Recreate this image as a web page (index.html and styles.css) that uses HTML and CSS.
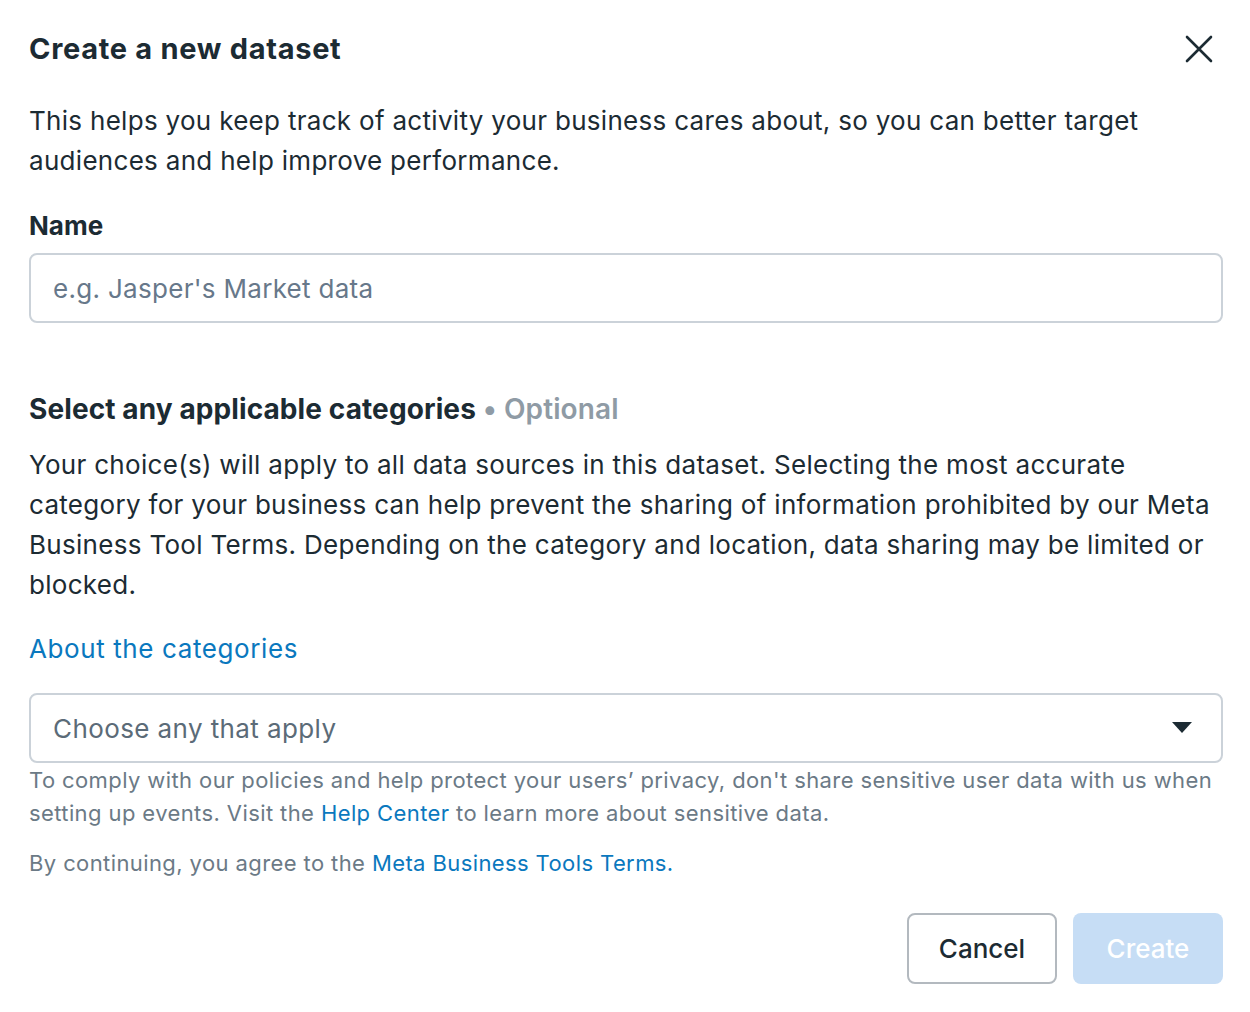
FILE: index.html
```html
<!DOCTYPE html>
<html lang="en">
<head>
<meta charset="utf-8">
<title>Create a new dataset</title>
<link rel="stylesheet" href="styles.css">
</head>
<body>
<div class="dialog">
  <div class="header">
    <h1 class="title">Create a new dataset</h1>
    <button class="close" aria-label="Close">
      <svg width="28" height="28" viewBox="0 0 28 28"><path d="M2 2 L26 26 M26 2 L2 26" stroke="#1c2b33" stroke-width="2.6" stroke-linecap="round" fill="none"/></svg>
    </button>
  </div>
  <p class="desc">This helps you keep track of activity your business cares about, so you can better target audiences and help improve performance.</p>
  <label class="label">Name</label>
  <div class="field"><span class="placeholder">e.g. Jasper's Market data</span></div>
  <h2 class="section">Select any applicable categories <span class="optional">• Optional</span></h2>
  <p class="para">Your choice(s) will apply to all data sources in this dataset. Selecting the most accurate category for your business can help prevent the sharing of information prohibited by our Meta Business Tool Terms. Depending on the category and location, data sharing may be limited or blocked.</p>
  <a class="link about">About the categories</a>
  <div class="field select"><span class="placeholder">Choose any that apply</span>
    <svg class="caret" width="20" height="12" viewBox="0 0 20 12"><path d="M0 0 H20 L10 11 Z" fill="#1c2b33"/></svg>
  </div>
  <p class="help">To comply with our policies and help protect your users’ privacy, don't share sensitive user data with us when setting up events. Visit the <a class="link">Help Center</a> to learn more about sensitive data.</p>
  <p class="help terms">By continuing, you agree to the <a class="link">Meta Business Tools Terms.</a></p>
  <div class="actions">
    <button class="btn cancel">Cancel</button>
    <button class="btn create">Create</button>
  </div>
</div>
</body>
</html>
```
FILE: styles.css
```css
* { box-sizing: border-box; }
html, body { margin: 0; padding: 0; background: #fff; }
body {
  font-family: Inter, "Noto Sans", sans-serif;
  color: #1c2b33;
}
.dialog {
  width: 1250px;
  padding: 29px 27px 0 29px;
}
.header {
  display: flex;
  justify-content: space-between;
  align-items: center;
}
.title {
  margin: 0;
  font-size: 29px;
  letter-spacing: 0.7px;
  line-height: 40px;
  font-weight: 700;
}
.close {
  border: 0;
  background: none;
  padding: 0;
  margin-right: 10px;
  width: 28px;
  height: 28px;
  display: flex;
}
.desc {
  margin: 32px 0 0;
  font-size: 26px;
  letter-spacing: 0.3px;
  line-height: 40px;
}
.label {
  display: block;
  margin-top: 27px;
  font-size: 26px;
  line-height: 36px;
  font-weight: 700;
}
.field {
  margin-top: 9px;
  height: 70px;
  border: 2px solid #cbd2d9;
  border-radius: 8px;
  display: flex;
  align-items: center;
  padding: 0 22px;
}
.placeholder {
  font-size: 26px;
  letter-spacing: 0.3px;
  color: #67788a;
}
.section {
  margin: 66px 0 0;
  font-size: 28px;
  line-height: 40px;
  font-weight: 700;
  letter-spacing: 0.1px;
}
.optional { color: #8f9ba5; font-weight: 600; }
.para {
  margin: 16px 0 0;
  font-size: 26px;
  letter-spacing: 0.3px;
  line-height: 40px;
}
.link { color: #0a78be; text-decoration: none; }
.about {
  display: block;
  margin-top: 24px;
  font-size: 26px;
  letter-spacing: 0.6px;
  line-height: 40px;
}
.select {
  margin-top: 24px;
  justify-content: space-between;
}
.select .placeholder { color: #5b6b78; letter-spacing: 0.4px; }
.caret { margin-right: 7px; }
.help {
  margin: 1px 0 0;
  font-size: 22px;
  letter-spacing: 0.4px;
  line-height: 33px;
  color: #6b7a86;
}
.terms { margin-top: 17px; }
.actions {
  display: flex;
  justify-content: flex-end;
  gap: 16px;
  margin-top: 33px;
}
.btn {
  height: 71px;
  width: 150px;
  border-radius: 8px;
  font-family: inherit;
  font-size: 26px;
  font-weight: 500;
}
.cancel {
  background: #fff;
  border: 2px solid #b3b9bf;
  color: #1c2b33;
}
.create {
  background: #c6ddf5;
  border: 0;
  color: #fff;
}
```
